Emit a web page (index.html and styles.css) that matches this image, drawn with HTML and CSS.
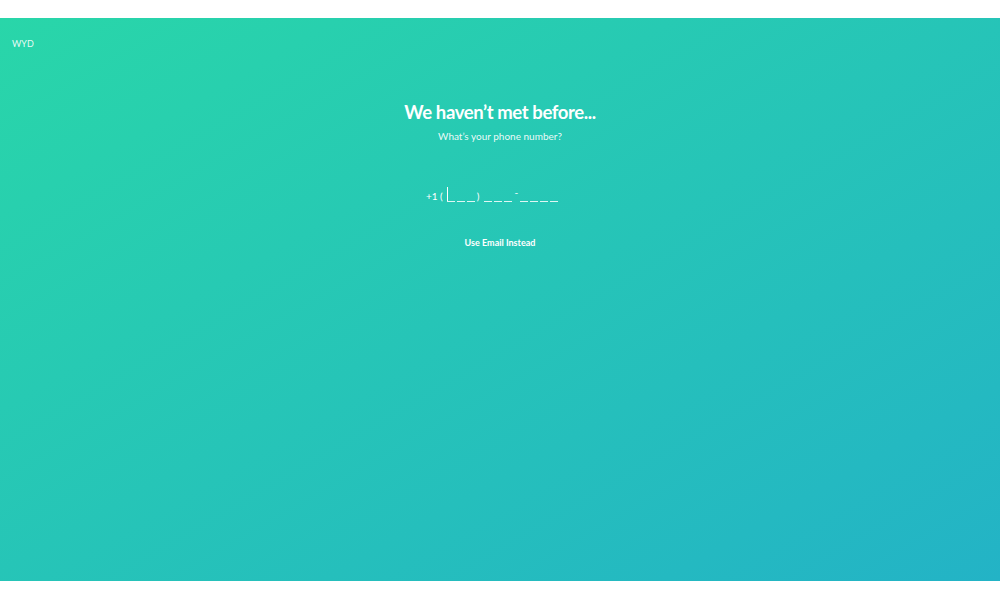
FILE: index.html
```html
<!DOCTYPE html>
<html>
<head>
<meta charset="utf-8">
<link rel="stylesheet" href="styles.css">
</head>
<body>
<div class="page">
  <div class="brand">WYD</div>
  <div class="center">
    <h1 class="title">We haven’t met before...</h1>
    <p class="subtitle">What’s your phone number?</p>
    <div class="phone">
      <span class="code">+1 (</span>
      <span class="slot caret"></span><span class="slot"></span><span class="slot"></span>
      <span class="paren">)</span>
      <span class="slot"></span><span class="slot"></span><span class="slot"></span>
      <span class="hyph">-</span>
      <span class="slot"></span><span class="slot"></span><span class="slot"></span><span class="slot"></span>
    </div>
    <div class="alt">Use Email Instead</div>
  </div>
</div>
</body>
</html>
```
FILE: styles.css
```css
html, body { margin: 0; padding: 0; background: #fff; }
body { padding: 18px 0 19px; font-family: Lato, "Open Sans", sans-serif; }
.page {
  height: 563px;
  background: linear-gradient(150deg, #29d6a9 0%, #23b3c6 100%);
  color: #fff;
  display: flex;
  flex-direction: column;
}
.brand {
  font-size: 9px;
  padding: 21px 0 0 12px;
  color: rgba(255,255,255,0.9);
  line-height: 10px;
}
.center {
  display: flex;
  flex-direction: column;
  align-items: center;
}
.title {
  margin: 51px 0 0;
  font-size: 18.5px;
  font-weight: 700;
  line-height: 24px;
  letter-spacing: -0.4px;
}
.subtitle {
  margin: 6px 0 0;
  font-size: 10px;
  line-height: 12px;
  color: rgba(255,255,255,0.92);
}
.phone {
  margin-top: 44px;
  display: flex;
  align-items: flex-end;
  height: 17px;
  font-size: 10px;
  padding-right: 15px;
}
.code { line-height: 14px; margin-right: 3px; }
.slot {
  width: 8px;
  height: 1px;
  background: rgba(255,255,255,0.85);
  margin: 0 1px 1px;
  display: block;
}
.caret { position: relative; }
.caret::before {
  content: "";
  position: absolute;
  left: 0;
  bottom: 1px;
  width: 1px;
  height: 14px;
  background: #fff;
}
.paren { line-height: 14px; margin: 0 4px 0 1px; }
.hyph { line-height: 14px; margin: 0 1px 4px; }
.alt {
  margin-top: 34px;
  font-size: 9px;
  font-weight: 700;
  line-height: 12px;
}
```
